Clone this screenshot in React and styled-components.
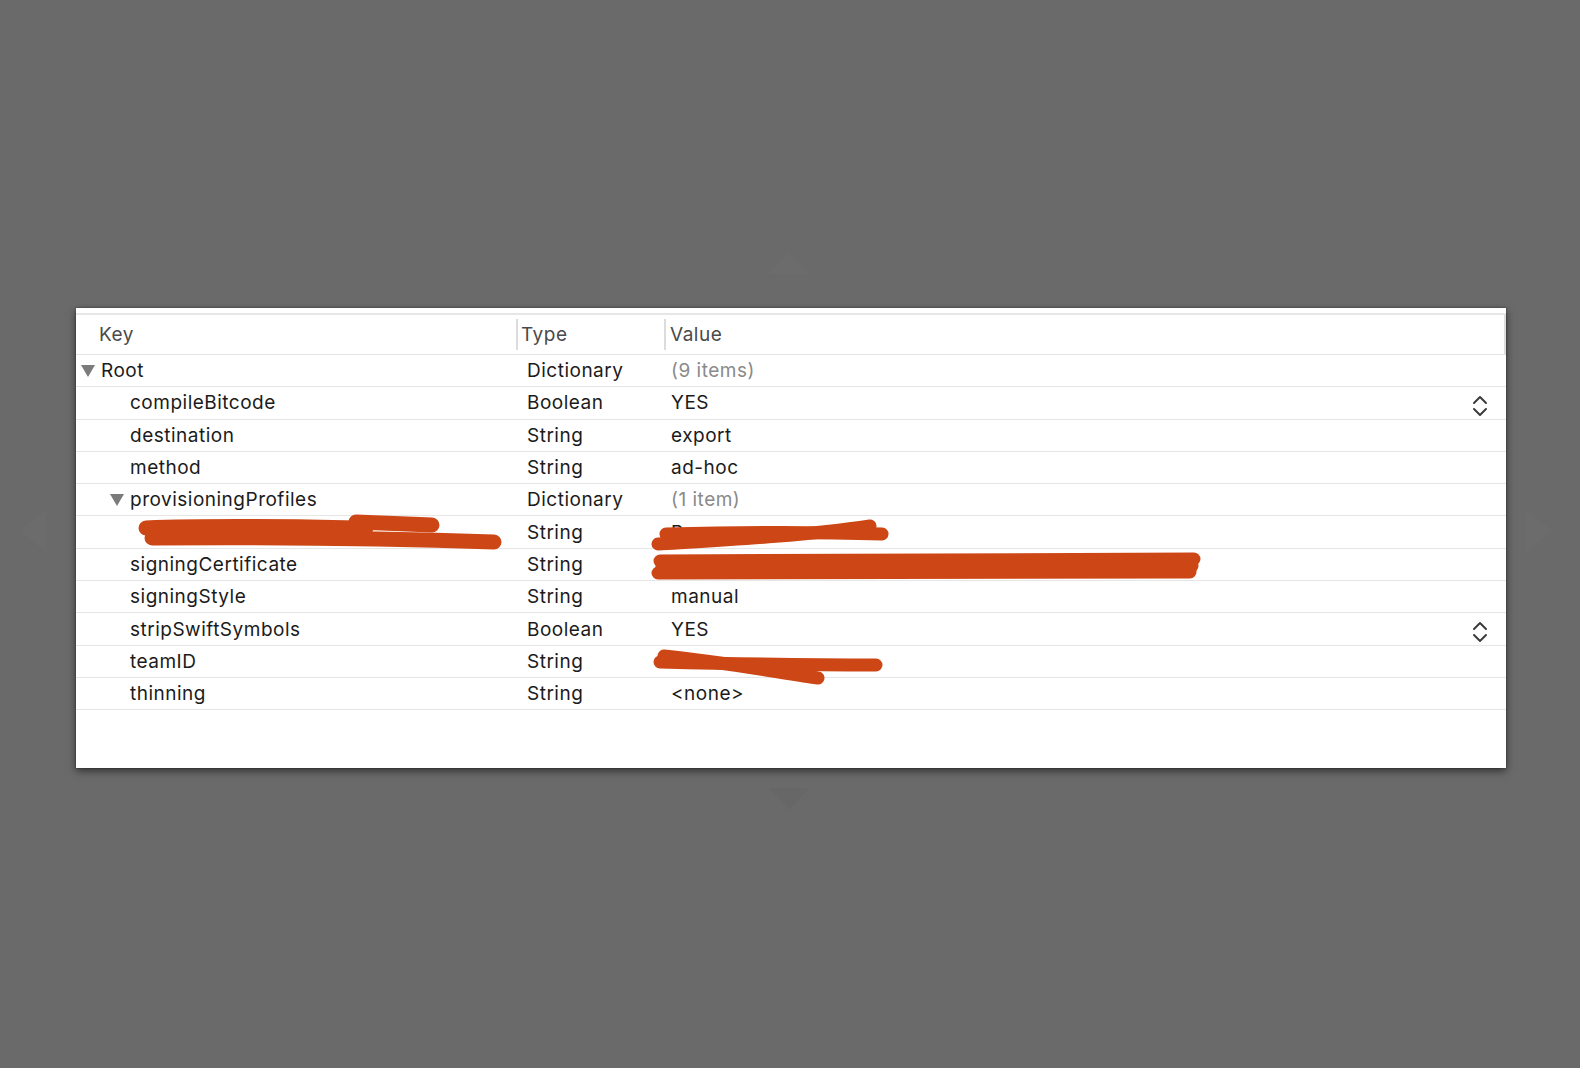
import styled, { createGlobalStyle } from 'styled-components'

const GlobalStyle = createGlobalStyle`
  html, body {
    margin: 0;
    padding: 0;
    background: #6a6a6a;
  }
  body {
    font-family: Inter, "Helvetica Neue", "Liberation Sans", Arial, sans-serif;
  }
`

const INK = '#cd4716'

const Page = styled.div`
  position: relative;
  width: 1580px;
  height: 1068px;
  overflow: hidden;
  padding: 308px 0 0 76px;
  box-sizing: border-box;
`

const Ghost = styled.svg`
  position: absolute;
  left: ${(p) => p.$x}px;
  top: ${(p) => p.$y}px;
  opacity: 0.13;
`

const Panel = styled.div`
  width: 1430px;
  height: 460px;
  background: #fff;
  padding-top: 5px;
  box-sizing: border-box;
  box-shadow: 0 3px 8px rgba(0, 0, 0, 0.55), 0 0 2px rgba(0, 0, 0, 0.4);
`

const Table = styled.div`
  border-top: 2px solid #e6e6e6;
  letter-spacing: 0.5px;
`

const Header = styled.div`
  display: grid;
  grid-template-columns: 440px 148px 1fr;
  height: 39px;
  border-bottom: 1px solid #e4e4e4;
  font-size: 19px;
  color: #4a4a4a;
  border-right: 2px solid #dddddd;
`

const HeadCell = styled.div`
  display: flex;
  align-items: center;
  padding-left: ${(p) => p.$pad}px;
  position: relative;
  &::before {
    content: '';
    display: ${(p) => (p.$sep ? 'block' : 'none')};
    position: absolute;
    left: 0;
    top: 4px;
    bottom: 4px;
    width: 2px;
    background: #dcdcdc;
  }
`

const Row = styled.div`
  display: grid;
  grid-template-columns: 440px 148px 1fr;
  height: 31.3px;
  border-bottom: 1px solid #e6e6e6;
  font-size: 19px;
  color: #1b1b1b;
`

const Cell = styled.div`
  position: relative;
  display: flex;
  align-items: center;
  padding-left: ${(p) => p.$pad || 0}px;
  padding-right: ${(p) => p.$right || 0}px;
  color: ${(p) => (p.$muted ? '#8a8a8a' : 'inherit')};
  white-space: nowrap;
`

const Disclosure = styled.span`
  width: 0;
  height: 0;
  border-left: 7px solid transparent;
  border-right: 7px solid transparent;
  border-top: 12px solid #7b7b7b;
  margin-right: 6px;
  margin-top: 1px;
`

const Spacer = styled.span`
  flex: 1;
`

const Stepper = styled.svg`
  margin-top: 6px;
`

const Scribble = styled.svg`
  position: absolute;
  left: ${(p) => p.$x}px;
  top: ${(p) => p.$y}px;
  overflow: visible;
  pointer-events: none;
`

function StepperIcon() {
  return (
    <Stepper width="16" height="22" viewBox="0 0 16 22">
      <path d="M2 8 L8 2 L14 8" fill="none" stroke="#3c3c3c" strokeWidth="2" strokeLinecap="round" strokeLinejoin="round" />
      <path d="M2 14 L8 20 L14 14" fill="none" stroke="#3c3c3c" strokeWidth="2" strokeLinecap="round" strokeLinejoin="round" />
    </Stepper>
  )
}

function Marker({ x, y, paths, width = 14 }) {
  return (
    <Scribble $x={x} $y={y} width="10" height="10">
      {paths.map((d, i) => (
        <path key={i} d={d} fill="none" stroke={INK} strokeWidth={width} strokeLinecap="round" strokeLinejoin="round" />
      ))}
    </Scribble>
  )
}

const rows = [
  { key: 'Root', level: 0, open: true, type: 'Dictionary', value: '(9 items)', muted: true },
  { key: 'compileBitcode', level: 1, type: 'Boolean', value: 'YES', stepper: true },
  { key: 'destination', level: 1, type: 'String', value: 'export' },
  { key: 'method', level: 1, type: 'String', value: 'ad-hoc' },
  { key: 'provisioningProfiles', level: 1, open: true, type: 'Dictionary', value: '(1 item)', muted: true },
  {
    key: '',
    level: 2,
    type: 'String',
    value: 'P',
    keyMark: ['M70 6 C 150 3, 230 5, 290 6', 'M76 16 C 200 15, 300 16, 418 20', 'M280 0 L 356 3'],
    valueMark: ['M-6 24 C 60 20, 140 16, 206 6', 'M2 14 C 80 12, 160 12, 218 14'],
  },
  {
    key: 'signingCertificate',
    level: 1,
    type: 'String',
    value: '',
    valueMark: ['M-4 8 L 530 6', 'M-6 20 L 526 19', 'M-2 14 L 528 13'],
  },
  { key: 'signingStyle', level: 1, type: 'String', value: 'manual' },
  { key: 'stripSwiftSymbols', level: 1, type: 'Boolean', value: 'YES', stepper: true },
  {
    key: 'teamID',
    level: 1,
    type: 'String',
    value: '',
    valueMark: ['M-4 12 C 80 14, 150 15, 212 15', 'M0 6 C 60 12, 110 22, 154 28'],
  },
  { key: 'thinning', level: 1, type: 'String', value: '<none>' },
]

export default function App() {
  return (
    <>
      <GlobalStyle />
      <Page>
        <Ghost $x={767} $y={248} width="44" height="28" viewBox="0 0 44 28">
          <path d="M2 26 L22 4 L42 26 Z" fill="#808080" />
        </Ghost>
        <Ghost $x={767} $y={786} width="44" height="26" viewBox="0 0 44 26">
          <path d="M2 2 L22 24 L42 2 Z" fill="#555555" />
        </Ghost>
        <Ghost $x={16} $y={508} width="32" height="46" viewBox="0 0 32 46">
          <path d="M30 2 L4 23 L30 44 Z" fill="#808080" />
        </Ghost>
        <Ghost $x={1524} $y={508} width="32" height="46" viewBox="0 0 32 46">
          <path d="M2 2 L28 23 L2 44 Z" fill="#808080" />
        </Ghost>

        <Panel>
          <Table>
            <Header>
              <HeadCell $pad={23}>Key</HeadCell>
              <HeadCell $pad={5} $sep>Type</HeadCell>
              <HeadCell $pad={6} $sep>Value</HeadCell>
            </Header>
            {rows.map((r, i) => (
              <Row key={i}>
                <Cell $pad={r.level === 0 ? 5 : r.open ? 34 : 54}>
                  {r.open && <Disclosure />}
                  {r.key}
                  {r.keyMark && <Marker x={0} y={6} paths={r.keyMark} width={15} />}
                </Cell>
                <Cell $pad={11}>{r.type}</Cell>
                <Cell $pad={7} $right={18} $muted={r.muted}>
                  {r.value}
                  {r.valueMark && <Marker x={0} y={4} paths={r.valueMark} width={13} />}
                  {r.stepper && (
                    <>
                      <Spacer />
                      <StepperIcon />
                    </>
                  )}
                </Cell>
              </Row>
            ))}
          </Table>
        </Panel>
      </Page>
    </>
  )
}
